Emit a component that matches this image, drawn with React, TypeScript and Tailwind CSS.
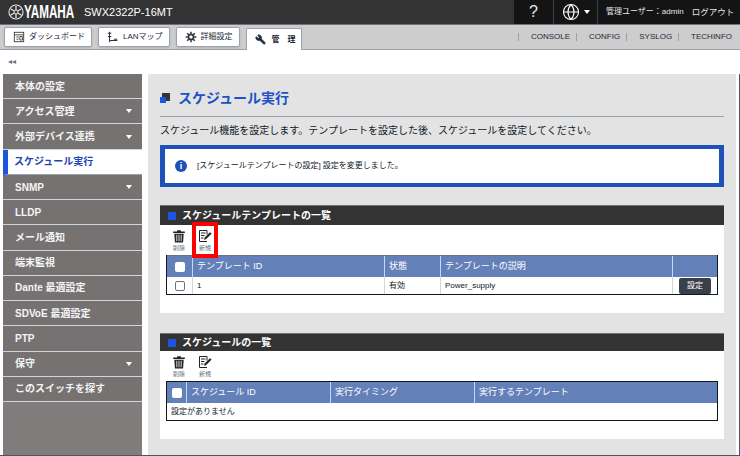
import { Globe, Wrench } from 'lucide-react'
import type { ReactNode } from 'react'

const sideItems = [
  { label: '本体の設定' },
  { label: 'アクセス管理', arrow: true },
  { label: '外部デバイス連携', arrow: true },
  { label: 'スケジュール実行', active: true },
  { label: 'SNMP', arrow: true },
  { label: 'LLDP' },
  { label: 'メール通知' },
  { label: '端末監視' },
  { label: 'Dante 最適設定' },
  { label: 'SDVoE 最適設定' },
  { label: 'PTP' },
  { label: '保守', arrow: true },
  { label: 'このスイッチを探す' },
]

function YamahaMark() {
  return (
    <svg viewBox="0 0 20 20" className="h-4 w-4 shrink-0" fill="none" stroke="#e5e5e5">
      <circle cx="10" cy="10" r="8.8" strokeWidth="1.4" />
      <circle cx="10" cy="10" r="2.4" strokeWidth="1.2" />
      <path d="M10 2.5v5M10 12.5v5M3.5 6.2l4.4 2.6M12.1 11.2l4.4 2.6M3.5 13.8l4.4-2.6M12.1 8.8l4.4-2.6" strokeWidth="1.6" />
    </svg>
  )
}

function DashIcon() {
  return (
    <svg viewBox="0 0 14 14" className="h-3 w-3" fill="none" stroke="#333">
      <rect x="1.5" y="1.5" width="11" height="11" strokeWidth="1" />
      <path d="M1.5 4.5h11M4 7h2.5M4 9.5h2.5M8 6.5h3v4H8z" strokeWidth="1" />
    </svg>
  )
}

function LanIcon() {
  return (
    <svg viewBox="0 0 14 14" className="h-3 w-3" fill="none" stroke="#333">
      <path d="M3 1v12M1 2.5h4M1 6.5h4M3 11h9M8 9.5h4" strokeWidth="1.2" />
    </svg>
  )
}

function GearIcon() {
  return (
    <svg viewBox="0 0 14 14" className="h-3 w-3" fill="none" stroke="#333">
      <circle cx="7" cy="7" r="3" strokeWidth="2" />
      <path d="M7 .8v2.4M7 10.8v2.4M.8 7h2.4M10.8 7h2.4M2.6 2.6l1.7 1.7M9.7 9.7l1.7 1.7M2.6 11.4l1.7-1.7M9.7 4.3l1.7-1.7" strokeWidth="1.8" />
    </svg>
  )
}

function TrashIcon() {
  return (
    <svg viewBox="0 0 12 12" className="h-3.5 w-3.5" fill="#222">
      <path d="M1 2.2h10v1.2H1zM4.4 1h3.2v1.2H4.4z" />
      <path d="M2 4h8l-.5 7.5h-7zM3.8 5v5.4h.7V5zM5.65 5v5.4h.7V5zM7.5 5v5.4h.7V5z" fillRule="evenodd" />
    </svg>
  )
}

function NewIcon() {
  return (
    <svg viewBox="0 0 14 13" className="h-3.5 w-3.5" fill="none" stroke="#222">
      <path d="M9 5V1H1.5v11H9" strokeWidth="1" />
      <path d="M3 3.5h4.5M3 6h3.5M3 8.5h2.5" strokeWidth="1" />
      <path d="M6.5 10l.5-2 5-5 1.2 1.2-5 5z" fill="#222" strokeWidth=".6" />
    </svg>
  )
}

function TabButton({ children, icon }: { children: ReactNode; icon: ReactNode }) {
  return (
    <div className="mb-0.5 flex h-5 items-center gap-1 rounded-xs border border-gray-400 bg-white pr-1.5 pl-2 text-[8px] whitespace-nowrap text-gray-800 shadow-sm">
      {icon}
      {children}
    </div>
  )
}

function Tool({ label, icon, marked }: { label: string; icon: ReactNode; marked?: boolean }) {
  return (
    <div
      className={`relative flex h-9 w-6.5 flex-col items-center justify-center gap-0.5 border-4 ${
        marked ? 'border-[#f00]' : 'border-transparent'
      }`}
    >
      {icon}
      <span className="text-[6px] leading-none whitespace-nowrap text-gray-500">{label}</span>
    </div>
  )
}

function Check({ dark }: { dark?: boolean }) {
  return <div className={`h-2.5 w-2.5 rounded-xs ${dark ? 'bg-white' : 'border border-gray-500 bg-white'}`} />
}

function Section({ title, marked, children }: { title: string; marked?: boolean; children: ReactNode }) {
  return (
    <section className="bg-white">
      <h2
        className={`flex items-center gap-1.5 border-t border-gray-500 bg-[#333333] px-2 text-[10px] leading-none font-bold text-white ${
          marked ? 'h-5' : 'h-4.5'
        }`}
      >
        <span className="h-2 w-2 bg-[#1a56e0]" />
        {title}
      </h2>
      <div className="px-1.5 pb-4.5">
        <div className="flex h-7.5 items-center">
          <Tool label="削除" icon={<TrashIcon />} />
          <Tool label="新規" icon={<NewIcon />} marked={marked} />
        </div>
        {children}
      </div>
    </section>
  )
}

export default function App() {
  return (
    <div className="flex h-screen w-full flex-col overflow-hidden bg-white font-['Liberation_Sans','Noto_Sans_CJK_JP',sans-serif]">
      <header className="flex h-6 shrink-0 items-center justify-between bg-[#333333] text-white">
        <div className="flex items-center pl-2">
          <YamahaMark />
          <span className="w-15 origin-left scale-x-65 text-lg leading-none font-bold">YAMAHA</span>
          <span className="text-[11px]">SWX2322P-16MT</span>
        </div>
        <div className="flex h-full w-[226px] items-center bg-[#141414]">
          <div className="flex h-full w-10 items-center justify-center border-r border-gray-700 text-base text-gray-200">?</div>
          <div className="flex h-full w-11 items-center justify-center gap-1 border-r border-gray-700">
            <Globe size={18} strokeWidth={1.5} />
            <span className="border-x-[3px] border-t-4 border-x-transparent border-t-white" />
          </div>
          <span className="pl-2 text-[8px] whitespace-nowrap text-gray-200">管理ユーザー：admin</span>
          <span className="pl-2 text-[8.5px] whitespace-nowrap text-gray-200">ログアウト</span>
        </div>
      </header>

      <nav className="flex h-6.5 shrink-0 items-end justify-between border-t border-b border-t-gray-500 border-b-gray-400 bg-[#cdcdcd] pl-1">
        <div className="flex items-end gap-1.5">
          <TabButton icon={<DashIcon />}>ダッシュボード</TabButton>
          <TabButton icon={<LanIcon />}>LANマップ</TabButton>
          <TabButton icon={<GearIcon />}>詳細設定</TabButton>
          <div className="-mb-px flex h-5.5 w-14 items-center gap-1.5 rounded-t-xs border border-b-0 border-gray-400 bg-white pl-2 text-[8px] font-bold whitespace-nowrap text-gray-800">
            <Wrench size={11} className="-scale-x-100 fill-gray-800" />
            <span>管　理</span>
          </div>
        </div>
        <div className="mb-2 flex items-center pr-2 text-[8px] leading-none text-gray-800">
          <span className="border-l border-gray-400 pr-1.5 pl-3">CONSOLE</span>
          <span className="border-l border-gray-400 pr-1.5 pl-3">CONFIG</span>
          <span className="border-l border-gray-400 pr-1.5 pl-3">SYSLOG</span>
          <span className="border-l border-gray-400 pl-3">TECHINFO</span>
        </div>
      </nav>

      <div className="flex h-6 shrink-0 items-center pl-2 text-[8px] text-gray-500">◂◂</div>

      <div className="flex min-h-0 flex-1 border-r border-b border-gray-600 pl-[3px]">
        <aside className="w-[139px] shrink-0 bg-[#807c7c]">
          <ul className="flex h-82 flex-col">
            {sideItems.map((item) => (
              <li
                key={item.label}
                className={`flex flex-1 items-center justify-between border-b text-[10px] font-bold ${
                  item.active
                    ? 'border-l-[5px] border-b-gray-400 border-l-[#1a56e0] bg-white pl-1.5 text-[#1a45b8]'
                    : 'border-b-gray-300 bg-[#767272] pl-3 text-gray-100'
                }`}
              >
                {item.label}
                {item.arrow && <span className="mr-2.5 border-x-[3px] border-t-4 border-x-transparent border-t-white" />}
              </li>
            ))}
          </ul>
        </aside>

        <main className="mr-[3px] ml-1.5 flex min-w-0 flex-1 flex-col bg-[#e3e3e3] px-3 pt-3.5">
          <div className="flex items-center gap-2 border-b border-gray-400 pb-2">
            <span className="relative h-2.5 w-2.5">
              <span className="absolute top-0 right-0 h-2 w-2 bg-[#333333]" />
              <span className="absolute bottom-0 left-0 h-1.5 w-1.5 bg-[#1a56e0]" />
            </span>
            <h1 className="text-sm leading-5 font-bold text-[#2050c8]">スケジュール実行</h1>
          </div>
          <p className="mt-1.5 text-[10px] leading-4 text-gray-900">
            スケジュール機能を設定します。テンプレートを設定した後、スケジュールを設定してください。
          </p>
          <div className="mt-1.5 flex h-10.5 items-center gap-2.5 border-4 border-x-[5px] border-[#1f52b8] bg-white pl-2.5 text-[8px] text-gray-900">
            <span className="flex h-3 w-3 items-center justify-center rounded-full bg-[#1f52b8] text-[9px] leading-none font-bold text-white">i</span>
            [スケジュールテンプレートの設定] 設定を変更しました。
          </div>

          <div className="mt-4.5">
            <Section title="スケジュールテンプレートの一覧" marked>
              <div className="border-x border-b border-gray-900 text-[8px] text-gray-900">
                <div className="flex h-[22px] border-t border-gray-500 bg-[#6480b8] text-[9px] text-white">
                  <div className="flex w-[26px] items-center justify-center border-r border-blue-200"><Check dark /></div>
                  <div className="flex w-48 items-center border-r border-blue-200 pl-1">テンプレート ID</div>
                  <div className="flex w-14 items-center border-r border-blue-200 pl-1">状態</div>
                  <div className="flex flex-1 items-center border-r border-blue-200 pl-1">テンプレートの説明</div>
                  <div className="w-11" />
                </div>
                <div className="flex h-[17px]">
                  <div className="flex w-[26px] items-center justify-center border-r border-gray-300"><Check /></div>
                  <div className="flex w-48 items-center border-r border-gray-300 pl-1">1</div>
                  <div className="flex w-14 items-center border-r border-gray-300 pl-1">有効</div>
                  <div className="flex flex-1 items-center border-r border-gray-300 pl-1">Power_supply</div>
                  <div className="flex w-11 items-center justify-center">
                    <span className="rounded-xs bg-[#3a3f4a] px-2 py-0.5 text-white">設定</span>
                  </div>
                </div>
              </div>
            </Section>
          </div>

          <div className="mt-5">
            <Section title="スケジュールの一覧">
              <div className="border-x border-b border-gray-900 text-[8px] text-gray-900">
                <div className="flex h-[22px] border-t border-gray-900 bg-[#6480b8] text-[9px] text-white">
                  <div className="flex w-5 items-center justify-center border-r border-blue-200"><Check dark /></div>
                  <div className="flex w-36 items-center border-r border-blue-200 pl-1">スケジュール ID</div>
                  <div className="flex w-36 items-center border-r border-blue-200 pl-1">実行タイミング</div>
                  <div className="flex flex-1 items-center pl-1">実行するテンプレート</div>
                </div>
                <div className="flex h-[17px] items-center pl-1">設定がありません</div>
              </div>
            </Section>
          </div>
        </main>
      </div>
    </div>
  )
}
